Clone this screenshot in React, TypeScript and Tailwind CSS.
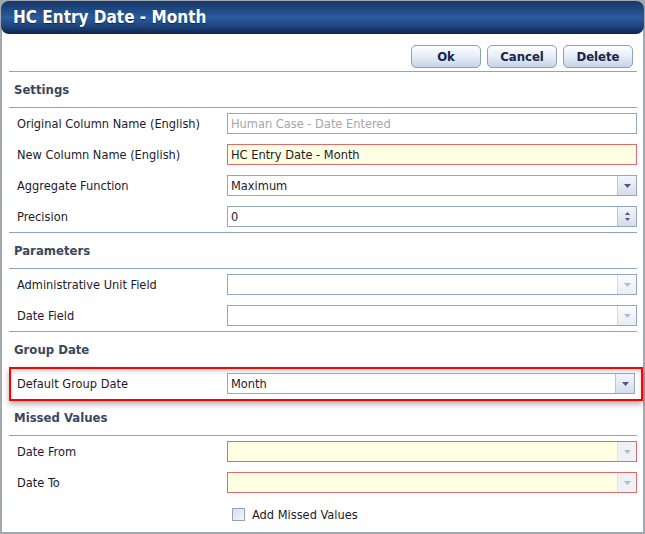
import React from "react";

const FONT = "font-['DejaVu_Sans_Condensed','DejaVu_Sans',sans-serif] [font-stretch:condensed]";

function Arrow({ dim }: { dim?: boolean }) {
  return (
    <svg width="7" height="4" viewBox="0 0 7 4">
      <path d="M0 0 H7 L3.5 4 Z" fill={dim ? "#b4bcc8" : "#4a5a7c"} />
    </svg>
  );
}

function DropBtn({ dim, yellow }: { dim?: boolean; yellow?: boolean }) {
  return (
    <div
      className={`w-[19px] h-full flex items-center justify-center border-l ${
        yellow ? "border-[#dfe3ea] bg-[#eef1f6]" : dim ? "border-[#d4dbe5] bg-gradient-to-b from-[#fbfcfd] to-[#e9eef4]" : "border-[#b9c6d8] bg-gradient-to-b from-[#f3f6fa] to-[#d3deeb]"
      }`}
    >
      <Arrow dim={dim || yellow} />
    </div>
  );
}

type FieldKind = "text" | "select" | "spin";

function Field({
  value,
  kind = "text",
  muted,
  required,
  dim,
}: {
  value?: string;
  kind?: FieldKind;
  muted?: boolean;
  required?: boolean;
  dim?: boolean;
}) {
  return (
    <div
      className={`flex-1 h-[21px] flex items-stretch border ${
        required ? "border-[#e06a6e] bg-[#ffffe1]" : "border-[#93a6c5] bg-white"
      }`}
    >
      <div className={`flex-1 flex items-center pl-[3px] text-[12.7px] ${muted ? "text-[#a6a6a6]" : "text-[#1c1a2c]"}`}>
        {value}
      </div>
      {kind === "select" && <DropBtn dim={dim} yellow={required} />}
      {kind === "spin" && (
        <div className="w-[19px] h-full flex flex-col items-center justify-center gap-[3px] border-l border-[#b9c6d8] bg-gradient-to-b from-[#f3f6fa] to-[#d3deeb]">
          <svg width="5" height="3" viewBox="0 0 5 3">
            <path d="M0 3 H5 L2.5 0 Z" fill="#4a5a7c" />
          </svg>
          <svg width="5" height="3" viewBox="0 0 5 3">
            <path d="M0 0 H5 L2.5 3 Z" fill="#4a5a7c" />
          </svg>
        </div>
      )}
    </div>
  );
}

function Row({ label, children }: { label: string; children: React.ReactNode }) {
  return (
    <div className="h-[21px] flex items-center">
      <div className="w-[218px] pl-[8px] text-[12.7px] text-[#1c1a2c]">{label}</div>
      {children}
    </div>
  );
}

function Header({ title, cls }: { title: string; cls: string }) {
  return (
    <div className={`flex items-center pl-[5px] text-[13px] font-bold text-[#3b4660] ${cls}`}>
      {title}
    </div>
  );
}

function Btn({ children }: { children: React.ReactNode }) {
  return (
    <button className="w-[70px] h-[23px] rounded-[5px] border border-[#8aa0c0] bg-gradient-to-b from-[#fdfeff] via-[#e6edf6] to-[#c6d4e8] text-[13px] font-bold text-[#1a2447] flex items-center justify-center">
      {children}
    </button>
  );
}

export default function App() {
  return (
    <div className={`w-[645px] h-[534px] bg-[#a3a8ae] pt-[1px] px-[2px] pb-[2px] ${FONT}`}>
      <div className="w-full h-full bg-white flex flex-col relative">
        <div className="absolute top-0 left-0 right-0 h-[12px] bg-[#a3a8ae]" />
        <div className="relative h-[33px] rounded-[8px] -mx-[1px] bg-[linear-gradient(to_bottom,#183566_0%,#22508d_35%,#2b5c9d_50%,#1c4177_80%,#0d244d_100%)] flex items-center pl-[12px]">
          <span className="text-white text-[17px] font-bold [text-shadow:0_1px_1px_rgba(0,0,0,0.5)]">
            HC Entry Date - Month
          </span>
        </div>
        <div className="pl-[7px] pr-[6px] flex flex-col">
          <div className="h-[38px] flex items-end justify-end gap-[6px] pr-[4px] pb-[3px] border-b border-[#8fa3c4]">
            <Btn>Ok</Btn>
            <Btn>Cancel</Btn>
            <Btn>Delete</Btn>
          </div>

          <Header title="Settings" cls="h-[36px] border-b border-[#8fa3c4]" />
          <div className="flex flex-col gap-[10px] pt-[5px] pb-[5px] border-b border-[#8fa3c4]">
            <Row label="Original Column Name (English)">
              <Field value="Human Case - Date Entered" muted />
            </Row>
            <Row label="New Column Name (English)">
              <Field value="HC Entry Date - Month" required />
            </Row>
            <Row label="Aggregate Function">
              <Field value="Maximum" kind="select" />
            </Row>
            <Row label="Precision">
              <Field value="0" kind="spin" />
            </Row>
          </div>

          <Header title="Parameters" cls="h-[36px] border-b border-[#8fa3c4]" />
          <div className="flex flex-col gap-[10px] pt-[5px] pb-[5px] border-b border-[#8fa3c4]">
            <Row label="Administrative Unit Field">
              <Field kind="select" dim />
            </Row>
            <Row label="Date Field">
              <Field kind="select" dim />
            </Row>
          </div>

          <Header title="Group Date" cls="h-[35px]" />
          <div className="-mr-[6px] border-2 border-[#ff0000] pt-[4px] pb-[5px] pr-[6px] shadow-[0_3px_6px_rgba(0,0,0,0.32),inset_0_3px_4px_rgba(0,0,0,0.14)]">
            <div className="h-[21px] flex items-center">
              <div className="w-[216px] pl-[6px] text-[12.7px] text-[#1c1a2c]">Default Group Date</div>
              <Field value="Month" kind="select" />
            </div>
          </div>

          <Header title="Missed Values" cls="h-[35px] border-b border-[#8fa3c4]" />
          <div className="flex flex-col gap-[10px] pt-[5px]">
            <Row label="Date From">
              <Field kind="select" required />
            </Row>
            <Row label="Date To">
              <Field kind="select" required />
            </Row>
            <div className="h-[21px] mt-[1px] flex items-center pl-[223px]">
              <div className="w-[13px] h-[13px] border border-[#8fa3c4] bg-gradient-to-br from-[#dcdfe4] to-[#f4f5f7]" />
              <span className="ml-[7px] text-[12.7px] text-[#1c1a2c]">Add Missed Values</span>
            </div>
          </div>
        </div>
      </div>
    </div>
  );
}
